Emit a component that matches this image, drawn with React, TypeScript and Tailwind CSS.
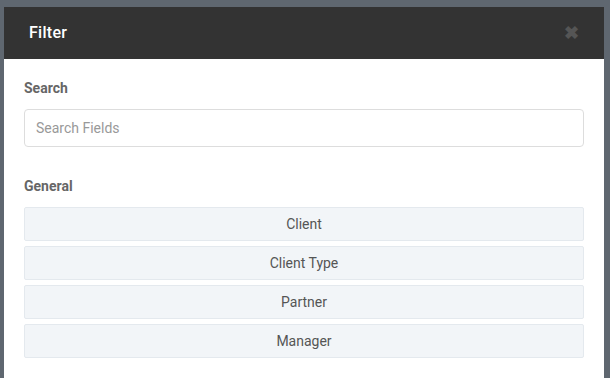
import React from 'react';

const fields = ['Client', 'Client Type', 'Partner', 'Manager'];

export default function App() {
  return (
    <div
      className="h-[378px] w-[610px] overflow-hidden bg-[#5f6770] pt-[7px] pl-[4px]"
      style={{ fontFamily: 'Roboto, "Liberation Sans", sans-serif' }}
    >
      <div className="h-[400px] w-[600px] bg-white">
        <div className="flex h-[52px] items-center justify-between bg-[#333333] pl-[25px] pr-[25px]">
          <h2 className="text-[16px] font-medium tracking-[0.3px] text-white">Filter</h2>
          <span className="text-[18px] font-bold leading-none text-[#555555]">✖</span>
        </div>
        <div className="px-[20px] pt-[20px] pb-[20px]">
          <div className="text-[14px] font-bold leading-[18px] text-[#666666]">Search</div>
          <input
            className="mt-[12px] h-[38px] w-full rounded-[4px] border border-[#dddddd] px-[11px] text-[14px] text-[#555] outline-none placeholder:text-[#999999]"
            placeholder="Search Fields"
          />
          <div className="mt-[30px] text-[14px] font-bold leading-[18px] text-[#666666]">General</div>
          <div className="mt-[12px] flex flex-col gap-[5px]">
            {fields.map((f) => (
              <div
                key={f}
                className="flex h-[34px] items-center justify-center rounded-[2px] border border-[#e4e9ee] bg-[#f2f5f8] text-[14px] text-[#555555]"
              >
                {f}
              </div>
            ))}
          </div>
        </div>
      </div>
    </div>
  );
}
